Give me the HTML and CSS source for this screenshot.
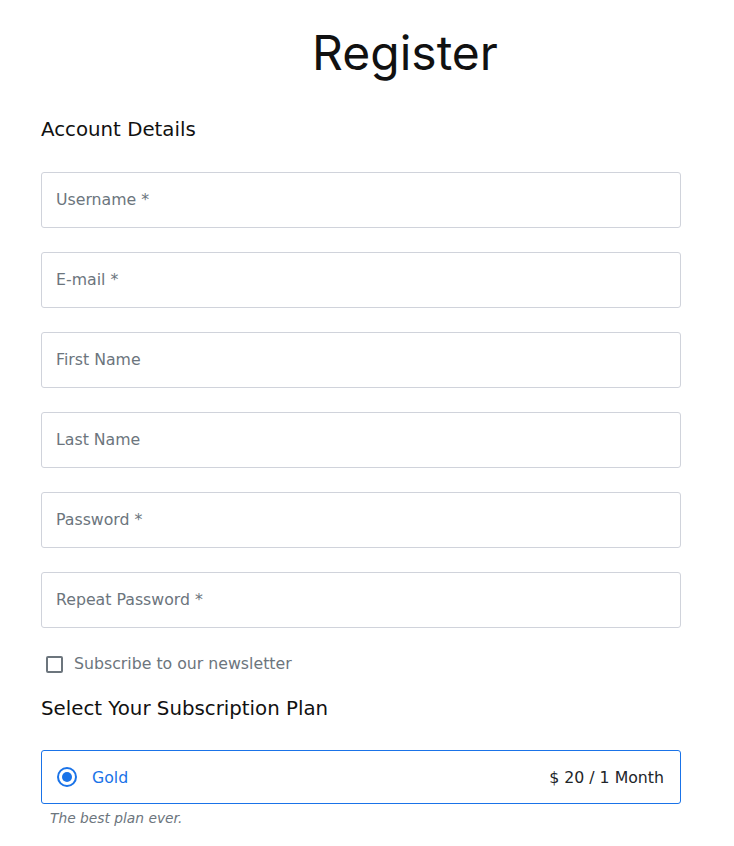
FILE: index.html
```html
<!DOCTYPE html>
<html>
<head>
<meta charset="utf-8">
<link rel="stylesheet" href="styles.css">
</head>
<body>
<div class="page">
  <h1 class="title">Register</h1>
  <h2 class="section">Account Details</h2>
  <div class="fields">
    <div class="field"><input type="text" placeholder="Username *"></div>
    <div class="field"><input type="text" placeholder="E-mail *"></div>
    <div class="field"><input type="text" placeholder="First Name"></div>
    <div class="field"><input type="text" placeholder="Last Name"></div>
    <div class="field"><input type="password" placeholder="Password *"></div>
    <div class="field"><input type="password" placeholder="Repeat Password *"></div>
  </div>
  <label class="check">
    <span class="box"></span>
    <span class="check-label">Subscribe to our newsletter</span>
  </label>
  <h2 class="section section-plan">Select Your Subscription Plan</h2>
  <div class="plan">
    <span class="radio"><span class="dot"></span></span>
    <span class="plan-name">Gold</span>
    <span class="plan-price">$ 20 / 1 Month</span>
  </div>
  <p class="hint">The best plan ever.</p>
</div>
</body>
</html>
```

FILE: styles.css
```css
html, body {
  margin: 0;
  padding: 0;
  background: #ffffff;
}
body {
  font-family: "DejaVu Sans", sans-serif;
  color: #212529;
}
.page {
  width: 640px;
  padding-left: 41px;
  display: flex;
  flex-direction: column;
}
.title {
  margin: 24px 0 0 0;
  padding-left: 88px;
  text-align: center;
  font-family: "Inter", sans-serif;
  font-weight: 400;
  font-size: 48px;
  line-height: 58px;
  color: #111111;
}
.section {
  margin: 36px 0 0 0;
  font-weight: 400;
  font-size: 19.8px;
  line-height: 24px;
  color: #111111;
}
.section-plan {
  margin-top: 21px;
}
.fields {
  margin-top: 30px;
  display: flex;
  flex-direction: column;
  gap: 24px;
}
.field input {
  box-sizing: border-box;
  display: block;
  width: 640px;
  height: 56px;
  border: 1px solid #d0d3db;
  border-radius: 3px;
  padding: 0 14px 1px 14px;
  font-family: "DejaVu Sans", sans-serif;
  font-size: 15.75px;
  color: #212529;
  background: #fff;
  outline: none;
}
.field input::placeholder {
  color: #6c757d;
  opacity: 1;
}
.check {
  margin-top: 24px;
  display: flex;
  align-items: center;
  height: 24px;
  gap: 11px;
  padding-left: 5px;
}
.box {
  box-sizing: border-box;
  width: 17px;
  height: 17px;
  border: 2px solid #6c757d;
  border-radius: 2px;
}
.check-label {
  font-size: 15.75px;
  line-height: 24px;
  color: #6c757d;
}
.plan {
  margin-top: 29px;
  box-sizing: border-box;
  height: 54px;
  border: 1px solid #1a73e8;
  border-radius: 3px;
  display: flex;
  align-items: center;
  padding: 0 16px 0 15px;
}
.radio {
  box-sizing: border-box;
  width: 20px;
  height: 20px;
  border: 2px solid #1a73e8;
  border-radius: 50%;
  display: flex;
  align-items: center;
  justify-content: center;
}
.dot {
  width: 10px;
  height: 10px;
  border-radius: 50%;
  background: #1a73e8;
}
.plan-name {
  margin-left: 15px;
  font-size: 15.75px;
  color: #1a73e8;
  flex: 1;
}
.plan-price {
  font-size: 15.75px;
  color: #212529;
}
.hint {
  margin: 4px 0 0 9px;
  font-size: 13.8px;
  line-height: 20px;
  font-style: italic;
  color: #6c757d;
}
```
